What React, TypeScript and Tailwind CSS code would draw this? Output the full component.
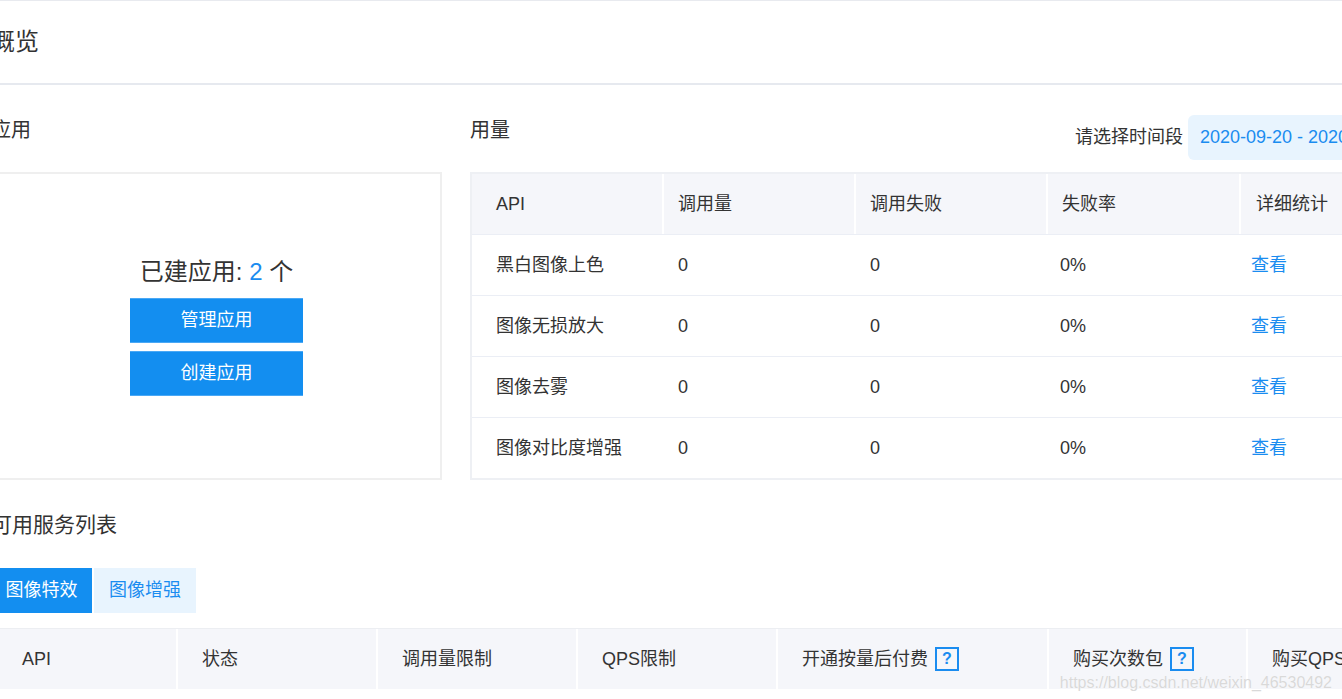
const font = "font-['Liberation_Sans','Noto_Sans_CJK_SC',sans-serif]"

const usageRows = [
  { api: "黑白图像上色", calls: "0", fails: "0", rate: "0%" },
  { api: "图像无损放大", calls: "0", fails: "0", rate: "0%" },
  { api: "图像去雾", calls: "0", fails: "0", rate: "0%" },
  { api: "图像对比度增强", calls: "0", fails: "0", rate: "0%" },
]

function Help() {
  return (
    <span className="ml-[7px] inline-flex h-[24px] w-[24px] items-center justify-center border-2 border-[#1a8cf0] text-[16px] font-bold leading-none text-[#1a8cf0]">
      ?
    </span>
  )
}

export default function App() {
  return (
    <div className={`relative h-[699px] w-[1342px] overflow-hidden bg-white text-[#333] ${font}`}>
      <div className="-ml-[9px] w-[1442px]">
        {/* page title */}
        <div className="flex h-[85px] items-center border-t border-b-2 border-t-[#e8eaef] border-b-[#e6e9ef]">
          <h1 className="text-[24px] leading-[32px] font-normal">概览</h1>
        </div>

        <div className="flex gap-[27px]">
          {/* apps */}
          <div className="w-[451px]">
            <div className="h-[87px] pt-[31px]">
              <h2 className="text-[20px] leading-[28px]">应用</h2>
            </div>
            <div className="flex h-[308px] flex-col items-center justify-center border-2 border-[#efefef]">
              <p className="text-[24px] leading-[32px]">
                已建应用: <span className="text-[#1a8cf0]">2</span> 个
              </p>
              <div className="mt-[10px] flex flex-col gap-[8px]">
                <button className="h-[45px] w-[173px] border-y border-[#4aa8f5] bg-[#138ef0] text-[18px] text-white">
                  管理应用
                </button>
                <button className="h-[45px] w-[173px] border-y border-[#4aa8f5] bg-[#138ef0] text-[18px] text-white">
                  创建应用
                </button>
              </div>
            </div>
          </div>

          {/* usage */}
          <div className="ml-[1px] w-[963px]">
            <div className="flex h-[87px] items-start justify-between">
              <h2 className="pt-[31px] text-[20px] leading-[28px]">用量</h2>
              <div className="flex items-center gap-[5px] pt-[30px]">
                <span className="text-[18px]">请选择时间段</span>
                <div className="flex h-[45px] w-[245px] items-center overflow-hidden whitespace-nowrap rounded-[6px] bg-[#e8f4fe] pl-[12px] text-[18px] text-[#1a8cf0]">
                  2020-09-20 - 2020-09-27
                </div>
              </div>
            </div>
            <div className="h-[308px] border-y-2 border-l-2 border-[#eef0f4] text-[18px]">
              <div className="flex h-[61px] border-b border-[#ebeef5] bg-[#f5f6fa]">
                <div className="flex w-[192px] items-center border-r-2 border-white pl-[24px]">API</div>
                <div className="flex w-[192px] items-center border-r-2 border-white pl-[14px]">调用量</div>
                <div className="flex w-[192px] items-center border-r-2 border-white pl-[14px]">调用失败</div>
                <div className="flex w-[193px] items-center border-r-2 border-white pl-[14px]">失败率</div>
                <div className="flex flex-1 items-center pl-[15px]">详细统计</div>
              </div>
              {usageRows.map((r, i) => (
                <div
                  key={r.api}
                  className={`flex h-[61px] ${i < usageRows.length - 1 ? "border-b border-[#ebeef5]" : "h-[60px]"}`}
                >
                  <div className="flex w-[192px] items-center pl-[24px]">{r.api}</div>
                  <div className="flex w-[192px] items-center pl-[14px]">{r.calls}</div>
                  <div className="flex w-[192px] items-center pl-[14px]">{r.fails}</div>
                  <div className="flex w-[193px] items-center pl-[12px]">{r.rate}</div>
                  <div className="flex flex-1 items-center pl-[10px] text-[#1a8cf0]">查看</div>
                </div>
              ))}
            </div>
          </div>
        </div>

        {/* services */}
        <div className="h-[88px] pt-[31px]">
          <h2 className="text-[21px] leading-[28px]">可用服务列表</h2>
        </div>
        <div className="flex gap-[2px] text-[18px]">
          <button className="h-[45px] w-[101px] bg-[#138ef0] text-white">图像特效</button>
          <button className="h-[45px] w-[102px] bg-[#e8f4fe] text-[#1a8cf0]">图像增强</button>
        </div>
        <div className="mt-[15px] flex h-[61px] border-t border-[#eceef2] bg-[#f5f6fa] text-[18px]">
          <div className="flex w-[187px] items-center border-r-2 border-white pl-[31px]">API</div>
          <div className="flex w-[200px] items-center border-r-2 border-white pl-[24px]">状态</div>
          <div className="flex w-[200px] items-center border-r-2 border-white pl-[24px]">调用量限制</div>
          <div className="flex w-[200px] items-center border-r-2 border-white pl-[24px]">QPS限制</div>
          <div className="flex w-[271px] items-center border-r-2 border-white pl-[24px]">
            开通按量后付费
            <Help />
          </div>
          <div className="flex w-[199px] items-center border-r-2 border-white pl-[24px]">
            购买次数包
            <Help />
          </div>
          <div className="flex flex-1 items-center pl-[24px]">购买QPS叠加包</div>
        </div>
      </div>

      <div className="pointer-events-none absolute right-[10px] top-[671px] text-[16px] text-[#d9d9d9] [text-shadow:0_0_1px_#fff]">
        https://blog.csdn.net/weixin_46530492
      </div>
    </div>
  )
}
